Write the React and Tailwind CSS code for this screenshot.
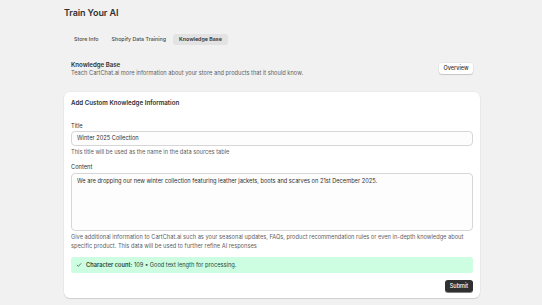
export default function App() {
  return (
    <div className="min-h-[305px] w-[542px] bg-[#f1f1f1] text-[#303030]" style={{ fontFamily: 'Inter, "Noto Sans", sans-serif' }}>
      <div className="ml-[64px] w-[416px] pt-[7px]">
        <h1 className="text-[9px] font-semibold leading-[12px] tracking-[-0.1px]">Train Your AI</h1>
        <div className="mt-[15px] flex gap-[1px] pl-[4px]">
          <div className="flex h-[11px] items-center rounded-[3px] px-[6px] text-[5.3px] font-medium text-[#4a4a4a]">Store Info</div>
          <div className="flex h-[11px] items-center rounded-[3px] px-[6px] text-[5.3px] font-medium text-[#4a4a4a]">Shopify Data Training</div>
          <div className="flex h-[11px] items-center rounded-[3px] bg-[#e3e3e3] px-[6px] text-[5.3px] font-semibold text-[#303030]">Knowledge Base</div>
        </div>
        <div className="mt-[16px] flex items-start justify-between px-[7px]">
          <div>
            <div className="text-[6.1px] font-semibold leading-[8px]">Knowledge Base</div>
            <div className="text-[5.7px] leading-[8px] text-[#616161]">Teach CartChat.ai more information about your store and products that it should know.</div>
          </div>
          <button className="mt-[2px] flex h-[11px] w-[34px] items-center justify-center rounded-[3px] bg-white text-[5.5px] font-medium text-[#303030] shadow-[0_1px_1px_rgba(0,0,0,0.15),0_0_0_0.5px_rgba(0,0,0,0.08)]">Overview</button>
        </div>
        <div className="mt-[15px] rounded-[6px] bg-white px-[7px] pb-[6px] pt-[7px] shadow-[0_1px_1px_rgba(0,0,0,0.12),0_0_0_0.5px_rgba(0,0,0,0.05)]">
          <div className="text-[6.2px] font-semibold leading-[8px]">Add Custom Knowledge Information</div>
          <div className="mt-[15px] text-[5.7px] leading-[8px]">Title</div>
          <div className="mt-[1px] flex h-[15px] items-center rounded-[4px] border border-[#d6d6d6] bg-[#fdfdfd] px-[5px] text-[5.7px]">Winter 2025 Collection</div>
          <div className="mt-[2px] text-[5.7px] leading-[7px] text-[#616161]">This title will be used as the name in the data sources table</div>
          <div className="mt-[8px] text-[5.7px] leading-[8px]">Content</div>
          <div className="mt-[2px] h-[58px] rounded-[4px] border border-[#d6d6d6] bg-[#fdfdfd] px-[5px] pt-[3px] text-[5.7px] leading-[8px]">We are dropping our new winter collection featuring leather jackets, boots and scarves on 21st December 2025.</div>
          <div className="mt-[1px] pr-[4px] text-[5.7px] leading-[9px] text-[#616161]">Give additional information to CartChat.ai such as your seasonal updates, FAQs, product recommendation rules or even in-depth knowledge about specific product. This data will be used to further refine AI responses</div>
          <div className="mt-[7px] flex h-[16px] items-center gap-[4px] rounded-[3px] bg-[#cdfee1] px-[5px] text-[5.7px] text-[#29473a]">
            <svg width="6" height="6" viewBox="0 0 20 20" fill="none"><path d="M4 10.5l4 4 8-9" stroke="#29473a" strokeWidth="2.2" strokeLinecap="round" strokeLinejoin="round" /></svg>
            <span><span className="font-semibold">Character count:</span> 109 • Good text length for processing.</span>
          </div>
          <div className="mt-[7px] flex justify-end">
            <button className="flex h-[12px] w-[28px] items-center justify-center rounded-[3px] bg-[#303030] text-[5.5px] font-medium text-white shadow-[0_1px_0_rgba(0,0,0,0.5)]">Submit</button>
          </div>
        </div>
      </div>
    </div>
  );
}
